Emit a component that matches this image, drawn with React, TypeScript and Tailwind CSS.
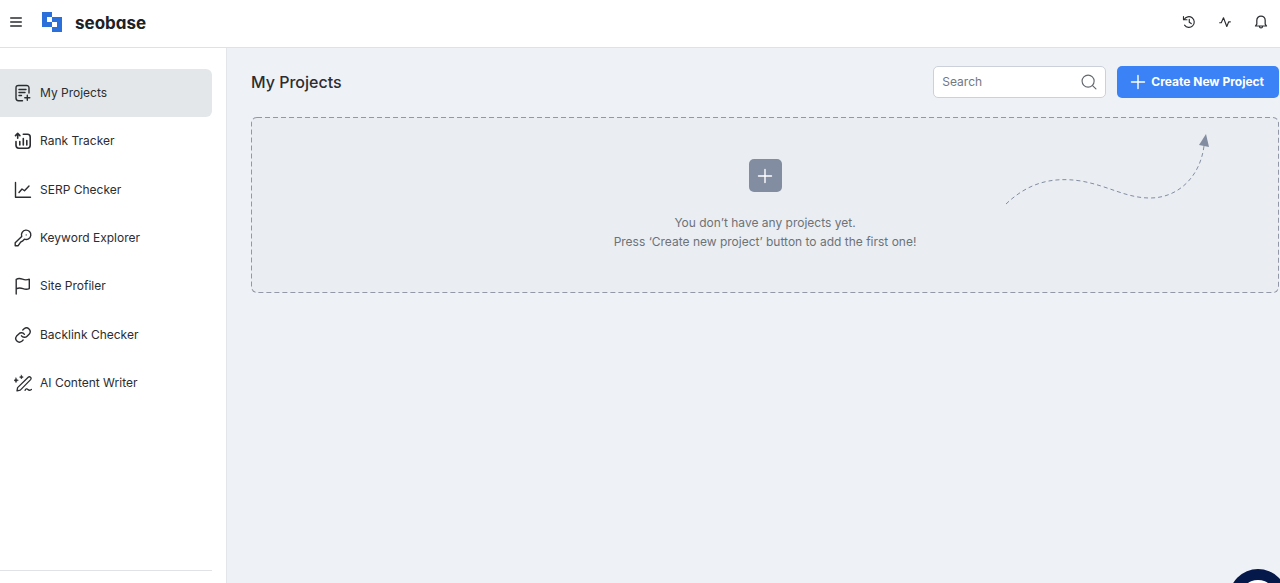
import React from 'react'
import { LuMenu } from 'react-icons/lu'

type IconProps = {
    children: React.ReactNode
    className?: string
    strokeWidth?: number
}

const Icon = ({ children, className = 'size-[18px]', strokeWidth = 1.5 }: IconProps) => (
    <svg
        viewBox="0 0 18 18"
        fill="none"
        stroke="currentColor"
        strokeWidth={strokeWidth}
        strokeLinecap="round"
        strokeLinejoin="round"
        aria-hidden="true"
        className={`shrink-0 ${className}`}
    >
        {children}
    </svg>
)

const ProjectsIcon = () => (
    <Icon strokeWidth={1.4}>
        <path d="M15 9V4Q15 1.5 12.5 1.5H4.5Q2 1.5 2 4V14Q2 16.7 4.5 16.7H8.5" />
        <path d="M5 5.5H12M5 8.5H11M5 11.5H7.5M13.3 11.3V16.3M10.8 13.8H15.8" />
    </Icon>
)

const RankIcon = () => (
    <Icon strokeWidth={1.6}>
        <path d="M9.3 2.2H13.5Q16.2 2.2 16.2 5V13.3Q16.2 16.2 13.5 16.2H4.8Q2 16.2 2 13.3V9.5" />
        <path d="M3.7 6.3V1.7M1.5 3.6L3.7 1.4L5.9 3.6M5.8 9.5V13M9.3 6.5V13M12.8 8.5V13" />
    </Icon>
)

const SerpIcon = () => (
    <Icon strokeWidth={1.4}>
        <path d="M1.5 1.5V16.3H16.5M5 11.5L8 8L10.5 9.8L15 5" />
    </Icon>
)

const KeyIcon = () => (
    <Icon strokeWidth={1.4}>
        <path d="M7.7 7.4L1.2 13.8V16.7H4.2L5.6 14.6L6.6 13.2L8.4 12.2L10.4 10.2A4.7 4.7 0 1 0 7.7 7.4Z" />
        <circle cx="12.2" cy="5.9" r=".6" fill="currentColor" stroke="none" />
    </Icon>
)

const FlagIcon = () => (
    <Icon strokeWidth={1.4}>
        <path d="M2.2 17V2.3Q5 .8 8.4 2.2T15.3 2.2V11.6Q12.5 13 9 11.7T2.2 11.8" />
    </Icon>
)

const LinkIcon = () => (
    <Icon strokeWidth={1.4}>
        <path d="M7.5 9.8A3.7 3.7 0 0 0 13.1 10.2L15.3 8A3.7 3.7 0 0 0 10.1 2.8L8.8 4.1" />
        <path d="M10.4 8.3A3.7 3.7 0 0 0 4.8 7.9L2.6 10.1A3.7 3.7 0 0 0 7.8 15.3L9.1 14" />
    </Icon>
)

const WriterIcon = () => (
    <Icon strokeWidth={1.3}>
        <path d="M3.6 13.6L14.2 3.2Q15.4 2.2 16.5 3.2T16.6 5.6L6.3 16.1L3 16.8Z" />
        <path d="M11 16.3Q12.5 14 13.9 15.5T17.4 15.4" />
        <path d="M2 3.9L2.7 5.6L4.4 6.3L2.7 7L2 8.7L1.3 7L-.4 6.3L1.3 5.6ZM7.4 1.2L8 2.5L9.3 3.1L8 3.7L7.4 5L6.8 3.7L5.5 3.1L6.8 2.5Z" fill="currentColor" strokeWidth=".5" />
    </Icon>
)

const menu = [
    { label: 'My Projects', icon: ProjectsIcon },
    { label: 'Rank Tracker', icon: RankIcon },
    { label: 'SERP Checker', icon: SerpIcon },
    { label: 'Keyword Explorer', icon: KeyIcon },
    { label: 'Site Profiler', icon: FlagIcon },
    { label: 'Backlink Checker', icon: LinkIcon },
    { label: 'AI Content Writer', icon: WriterIcon },
]

const Header = () => (
    <header className="flex h-12 shrink-0 items-center justify-between border-b border-[#dfe1e4] bg-white px-2 pb-1">
        <div className="flex items-center">
            <button aria-label="Toggle menu" className="cursor-pointer">
                <LuMenu size={16} />
            </button>
            <a href="#" className="ml-[18px] flex items-center gap-[13px]">
                <svg viewBox="0 0 20 20" className="size-5" aria-hidden="true">
                    <path fill="#2b6fdb" fillRule="evenodd" d="M0 0H10V5H20V20H10V15H0ZM5 5H10V10H5ZM10 10H15V15H10Z" />
                </svg>
                <span className="pt-0.5 text-[17px] leading-5 font-bold text-[#202124] [font-feature-settings:'cv11']">seobase</span>
            </a>
        </div>
        <div className="flex items-center gap-5 pr-[3px]">
            <button aria-label="History" className="cursor-pointer">
                <Icon className="size-4" strokeWidth={1.3}>
                    <path d="M3.6 6.2A6 6 0 1 1 4 12.5M2.8 2.8V6.5H6.7M9.3 6V9.3L11.5 10.8" />
                </Icon>
            </button>
            <button aria-label="Activity" className="cursor-pointer">
                <Icon className="size-4" strokeWidth={1.3}>
                    <path d="M3 9.8H4.8L7.3 4.3L11 14L13.2 8.8H15" />
                </Icon>
            </button>
            <button aria-label="Notifications" className="cursor-pointer">
                <Icon className="size-4" strokeWidth={1.4}>
                    <path d="M2.8 13.5H15.2L13.7 11.3V7A4.7 4.7 0 0 0 4.3 7V11.3ZM7.3 14A1.7 1.7 0 0 0 10.7 14" />
                </Icon>
            </button>
        </div>
    </header>
)

const Sidebar = () => (
    <aside className="flex w-[227px] shrink-0 flex-col justify-between border-r border-[#e2e5ea] bg-white pt-[21px] pr-[14px] pb-3">
        <nav className="grid min-h-[338px] auto-rows-fr">
            {menu.map(({ label, icon: MenuIcon }, index) => (
                <a
                    key={label}
                    href="#"
                    className={`flex items-center gap-2 pl-[14px] text-xs ${index === 0 ? 'rounded-r-md bg-[#e3e7ea]' : ''}`}
                >
                    <MenuIcon />
                    {label}
                </a>
            ))}
        </nav>
        <hr className="border-[#e0e2e5]" />
    </aside>
)

const EmptyProjects = () => (
    <section className="relative mt-[19px] flex min-h-44 flex-col items-center rounded-md bg-[#eaeef3] pt-[42px] pb-10">
        <svg className="absolute inset-0 size-full rounded-md" fill="none" stroke="#9298a5" aria-hidden="true">
            <rect x="0" y="0" width="100%" height="100%" rx="6" strokeWidth="2" strokeDasharray="5 3" />
        </svg>
        <span className="flex size-[33px] items-center justify-center rounded-[5px] bg-[#828da1] text-white">
            <Icon className="size-[18px]" strokeWidth={1.4}>
                <path d="M9 2.5V15.5M2.5 9H15.5" />
            </Icon>
        </span>
        <p className="mt-[21px] text-center text-xs leading-[19px] text-[#6d7277]">
            You don’t have any projects yet.
            <br />
            Press ‘Create new project’ button to add the first one!
        </p>
        {/* points up to the create button */}
        <svg viewBox="0 0 206 74" className="absolute top-4 right-[69px] h-[74px] w-[206px]" fill="none" aria-hidden="true">
            <path
                d="M2 71C22 52 45 43 77 48C105 53 122 65 146 65C174 65 196 44 200 13"
                stroke="#828da1"
                strokeDasharray="4 3"
            />
            <path d="M202 1L205 14L195 12Z" fill="#828da1" />
        </svg>
    </section>
)

const App = () => {
    const [search, setSearch] = React.useState('')
    return (
        <div className="relative flex h-screen flex-col overflow-hidden bg-[#eef2f7] font-[Inter,sans-serif] text-[#2b2d30]">
            <Header />
            <div className="flex min-h-0 flex-1">
                <Sidebar />
                <main className="flex-1 pt-[18px] pr-px pl-6">
                    <div className="flex items-center justify-between">
                        <h1 className="text-base font-medium">My Projects</h1>
                        <div className="flex items-center gap-[11px]">
                            <label className="flex h-8 w-[173px] items-center justify-between rounded-[5px] border border-[#ccd1d9] bg-white px-2 text-[#63686e]">
                                <input
                                    type="text"
                                    aria-label="Search"
                                    placeholder="Search"
                                    value={search}
                                    onChange={(e) => setSearch(e.target.value)}
                                    className="w-full min-w-0 text-xs outline-none placeholder:text-[#73787f]"
                                />
                                <Icon className="size-4" strokeWidth={1.3}>
                                    <circle cx="8" cy="8" r="6.8" />
                                    <path d="M13 13L16.8 16.8" />
                                </Icon>
                            </label>
                            <button className="flex h-8 cursor-pointer items-center gap-1 rounded-[5px] bg-[#3b82f6] pr-[15px] pl-3 text-xs font-bold text-white">
                                <Icon className="size-[18px]" strokeWidth={1.4}>
                                    <path d="M9 2.5V15.5M2.5 9H15.5" />
                                </Icon>
                                Create New Project
                            </button>
                        </div>
                    </div>
                    <EmptyProjects />
                </main>
            </div>
            <button
                aria-label="Open chat"
                className="absolute -right-[7px] -bottom-11 flex size-[58px] cursor-pointer items-center justify-center rounded-full bg-[#04184a]"
            >
                <span className="size-9 rounded-full bg-white" />
            </button>
        </div>
    )
}

export default App
